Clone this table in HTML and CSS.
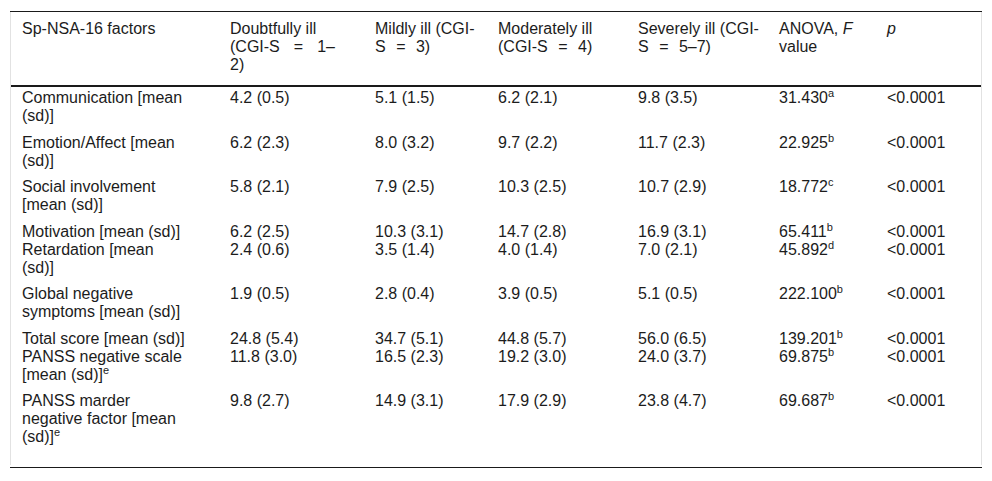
FILE: index.html
```html
<!DOCTYPE html>
<html lang="en">
<head>
<meta charset="utf-8">
<title>Sp-NSA-16 factors by CGI-S</title>
<link rel="stylesheet" href="styles.css">
</head>
<body>
<div class="table-frame">
  <div class="table-scroll">
    <table class="data">
      <colgroup>
        <col class="c1"><col class="c2"><col class="c3"><col class="c4"><col class="c5"><col class="c6"><col class="c7">
      </colgroup>
      <thead>
        <tr>
          <th class="k1">Sp-NSA-16 factors</th>
          <th class="k2 just">Doubtfully ill<br>(CGI-S <span class="eq">=</span> 1–2)</th>
          <th class="k3">Mildly ill (CGI-S <span class="eq">=</span> 3)</th>
          <th class="k4">Moderately ill<br>(CGI-S <span class="eq">=</span> 4)</th>
          <th class="k5">Severely ill (CGI-S <span class="eq">=</span> 5–7)</th>
          <th class="k6">ANOVA, <i>F</i> value</th>
          <th class="k7"><i>p</i></th>
        </tr>
      </thead>
      <tbody>
        <tr class="ml first">
          <td class="k1">Communication [mean (sd)]</td>
          <td class="k2">4.2 (0.5)</td><td class="k3">5.1 (1.5)</td><td class="k4">6.2 (2.1)</td><td class="k5">9.8 (3.5)</td>
          <td class="k6">31.430<sup>a</sup></td><td class="k7">&lt;0.0001</td>
        </tr>
        <tr class="ml">
          <td class="k1">Emotion/Affect [mean (sd)]</td>
          <td class="k2">6.2 (2.3)</td><td class="k3">8.0 (3.2)</td><td class="k4">9.7 (2.2)</td><td class="k5">11.7 (2.3)</td>
          <td class="k6">22.925<sup>b</sup></td><td class="k7">&lt;0.0001</td>
        </tr>
        <tr class="ml">
          <td class="k1">Social involvement [mean (sd)]</td>
          <td class="k2">5.8 (2.1)</td><td class="k3">7.9 (2.5)</td><td class="k4">10.3 (2.5)</td><td class="k5">10.7 (2.9)</td>
          <td class="k6">18.772<sup>c</sup></td><td class="k7">&lt;0.0001</td>
        </tr>
        <tr>
          <td class="k1">Motivation [mean (sd)]</td>
          <td class="k2">6.2 (2.5)</td><td class="k3">10.3 (3.1)</td><td class="k4">14.7 (2.8)</td><td class="k5">16.9 (3.1)</td>
          <td class="k6">65.411<sup>b</sup></td><td class="k7">&lt;0.0001</td>
        </tr>
        <tr class="ml">
          <td class="k1">Retardation [mean (sd)]</td>
          <td class="k2">2.4 (0.6)</td><td class="k3">3.5 (1.4)</td><td class="k4">4.0 (1.4)</td><td class="k5">7.0 (2.1)</td>
          <td class="k6">45.892<sup>d</sup></td><td class="k7">&lt;0.0001</td>
        </tr>
        <tr class="ml">
          <td class="k1">Global negative symptoms [mean (sd)]</td>
          <td class="k2">1.9 (0.5)</td><td class="k3">2.8 (0.4)</td><td class="k4">3.9 (0.5)</td><td class="k5">5.1 (0.5)</td>
          <td class="k6">222.100<sup>b</sup></td><td class="k7">&lt;0.0001</td>
        </tr>
        <tr>
          <td class="k1">Total score [mean (sd)]</td>
          <td class="k2">24.8 (5.4)</td><td class="k3">34.7 (5.1)</td><td class="k4">44.8 (5.7)</td><td class="k5">56.0 (6.5)</td>
          <td class="k6">139.201<sup>b</sup></td><td class="k7">&lt;0.0001</td>
        </tr>
        <tr class="ml">
          <td class="k1">PANSS negative scale [mean (sd)]<sup>e</sup></td>
          <td class="k2">11.8 (3.0)</td><td class="k3">16.5 (2.3)</td><td class="k4">19.2 (3.0)</td><td class="k5">24.0 (3.7)</td>
          <td class="k6">69.875<sup>b</sup></td><td class="k7">&lt;0.0001</td>
        </tr>
        <tr class="last">
          <td class="k1">PANSS marder negative factor [mean (sd)]<sup>e</sup></td>
          <td class="k2">9.8 (2.7)</td><td class="k3">14.9 (3.1)</td><td class="k4">17.9 (2.9)</td><td class="k5">23.8 (4.7)</td>
          <td class="k6">69.687<sup>b</sup></td><td class="k7">&lt;0.0001</td>
        </tr>
      </tbody>
    </table>
  </div>
</div>
</body>
</html>
```

FILE: styles.css
```css
html, body {
  margin: 0;
  padding: 0;
  background: #ffffff;
}

body {
  font-family: "Liberation Sans", Arial, sans-serif;
  font-size: 16px;
  line-height: 18px;
  color: #1c1c1c;
}

.table-frame {
  margin: 11px 0 0 10px;
  width: 972px;
  border-top: 1px solid #1a1a1a;
  border-bottom: 1px solid #1a1a1a;
  padding-bottom: 2px;
}

.table-scroll {
  border-left: 1px solid #e2e2e2;
  border-right: 1px solid #e2e2e2;
}

.data {
  width: 970px;
  border-collapse: collapse;
  table-layout: fixed;
}

.c1 { width: 208px; }
.c2 { width: 145px; }
.c3 { width: 123px; }
.c4 { width: 140px; }
.c5 { width: 141px; }
.c6 { width: 108px; }
.c7 { width: 105px; }

.data th,
.data td {
  vertical-align: top;
  text-align: left;
  font-weight: normal;
  padding: 0 0 0 11px;
}

.data th {
  padding-top: 8px;
  padding-bottom: 11px;
  border-bottom: 2px solid #1a1a1a;
}

.data th.just {
  text-align: justify;
}

.data .k1 { padding-right: 31px; }
.data .k2 { padding-right: 29px; }
.data .k3 { padding-right: 7px; }
.data .k4 { padding-right: 9px; }
.data .k5 { padding-right: 4px; }
.data .k6 { padding-right: 0; }
.data .k7 { padding-right: 0; }

.data .ml td {
  padding-bottom: 8.5px;
}

.data .first td {
  padding-top: 2px;
}

.data .last td {
  padding-bottom: 19px;
}

.eq {
  margin: 0 6px;
}

sup {
  font-size: 11px;
  line-height: 0;
  vertical-align: 6px;
}
```
